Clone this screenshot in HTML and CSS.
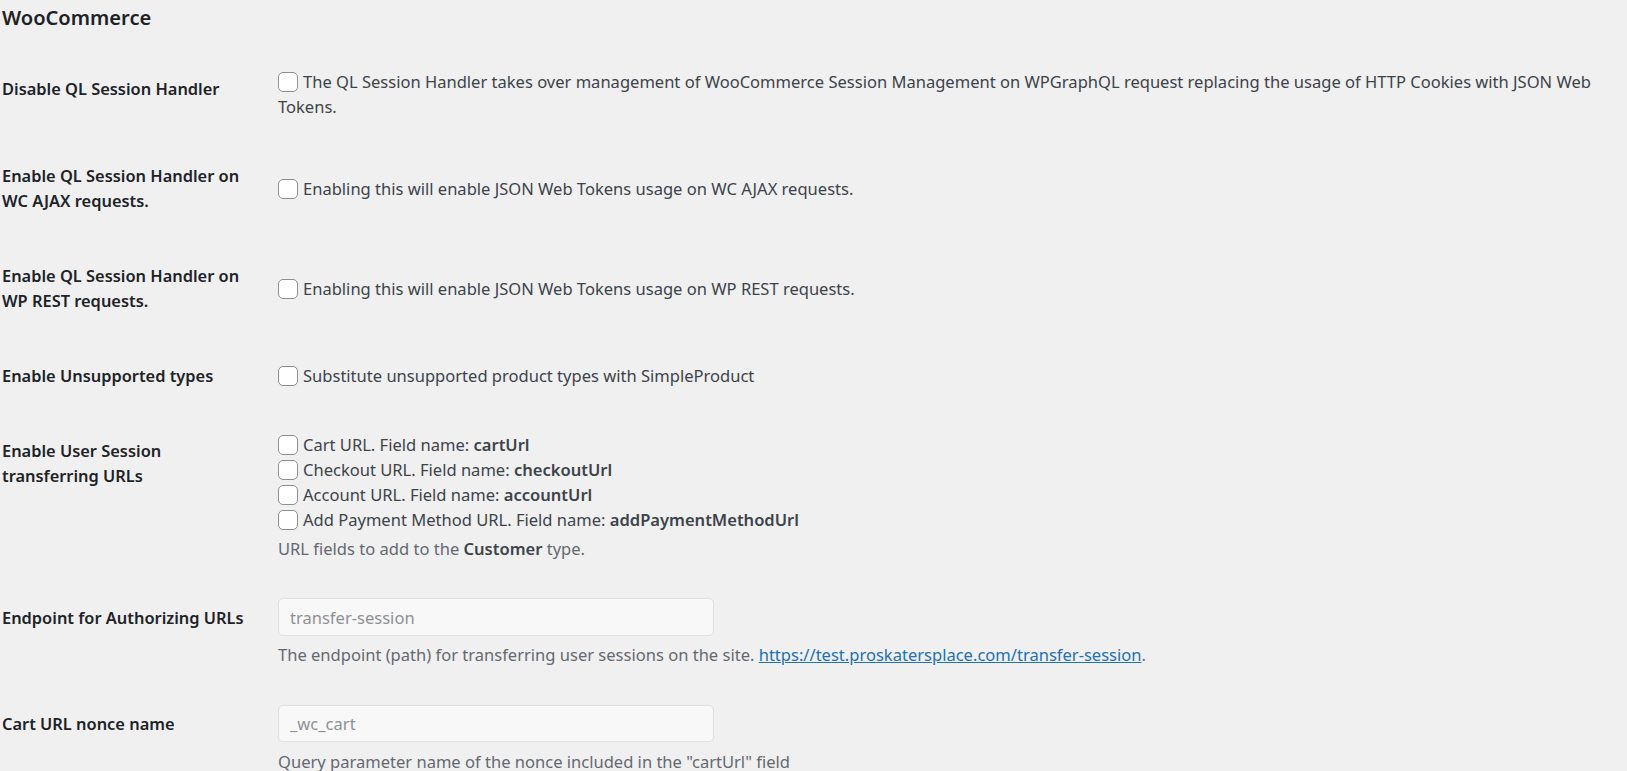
FILE: index.html
```html
<!DOCTYPE html>
<html lang="en">
<head>
<meta charset="utf-8">
<title>WooCommerce settings</title>
<link rel="stylesheet" href="styles.css">
</head>
<body>
<div class="wrap">
  <h2 class="section-title">WooCommerce</h2>
  <div class="form-table">
    <div class="row">
      <div class="th">Disable QL Session Handler</div>
      <div class="td">
        <label class="check"><input class="cb" type="checkbox">The QL Session Handler takes over management of WooCommerce Session Management on WPGraphQL request replacing the usage of HTTP Cookies with JSON Web Tokens.</label>
      </div>
    </div>
    <div class="row">
      <div class="th">Enable QL Session Handler on WC AJAX requests.</div>
      <div class="td">
        <label class="check"><input class="cb" type="checkbox">Enabling this will enable JSON Web Tokens usage on WC AJAX requests.</label>
      </div>
    </div>
    <div class="row">
      <div class="th">Enable QL Session Handler on WP REST requests.</div>
      <div class="td">
        <label class="check"><input class="cb" type="checkbox">Enabling this will enable JSON Web Tokens usage on WP REST requests.</label>
      </div>
    </div>
    <div class="row">
      <div class="th">Enable Unsupported types</div>
      <div class="td">
        <label class="check"><input class="cb" type="checkbox">Substitute unsupported product types with SimpleProduct</label>
      </div>
    </div>
    <div class="row">
      <div class="th">Enable User Session transferring URLs</div>
      <div class="td">
        <label class="check line"><input class="cb" type="checkbox">Cart URL. Field name: <strong>cartUrl</strong></label>
        <label class="check line"><input class="cb" type="checkbox">Checkout URL. Field name: <strong>checkoutUrl</strong></label>
        <label class="check line"><input class="cb" type="checkbox">Account URL. Field name: <strong>accountUrl</strong></label>
        <label class="check line"><input class="cb" type="checkbox">Add Payment Method URL. Field name: <strong>addPaymentMethodUrl</strong></label>
        <p class="description">URL fields to add to the <strong>Customer</strong> type.</p>
      </div>
    </div>
    <div class="row">
      <div class="th">Endpoint for Authorizing URLs</div>
      <div class="td">
        <input class="text-input" type="text" value="transfer-session" disabled>
        <p class="description after-input">The endpoint (path) for transferring user sessions on the site. <a href="#">https://test.proskatersplace.com/transfer-session</a>.</p>
      </div>
    </div>
    <div class="row">
      <div class="th">Cart URL nonce name</div>
      <div class="td">
        <input class="text-input" type="text" value="_wc_cart" disabled>
        <p class="description after-input">Query parameter name of the nonce included in the "cartUrl" field</p>
      </div>
    </div>
  </div>
</div>
</body>
</html>
```
FILE: styles.css
```css
* { box-sizing: border-box; }
html, body {
  margin: 0;
  padding: 0;
  background: #f0f0f1;
}
body {
  font-family: "Noto Sans", "Open Sans", sans-serif;
  font-size: 16.55px;
  line-height: 25px;
  color: #3c434a;
  overflow: hidden;
}
.wrap {
  padding: 5px 0 0 2px;
}
.section-title {
  margin: 0 0 19.5px;
  font-size: 20.1px;
  line-height: 26px;
  font-weight: 600;
  color: #1d2327;
}
.row {
  display: grid;
  grid-template-columns: 263.5px 1fr;
}
.th {
  align-self: start;
  padding: 25px 12.5px 25px 0;
  font-size: 16.4px;
  font-weight: 600;
  color: #1d2327;
}
.td {
  align-self: center;
  padding: 18.75px 12.5px;
}
.check {
  display: inline;
}
.check.line {
  display: block;
}
.check strong, .description strong {
  font-weight: 600;
  color: #3c434a;
}
.cb {
  appearance: none;
  -webkit-appearance: none;
  display: inline-block;
  width: 20px;
  height: 20px;
  margin: 0 5px 0 0;
  border: 1px solid #8c8f94;
  border-radius: 5px;
  background: #fff;
  vertical-align: -4px;
}
.description {
  margin: 4px 0 0;
  color: #646970;
}
.description.after-input {
  margin-top: 6.5px;
}
.description a {
  color: #2271b1;
  text-decoration: underline;
}
.text-input {
  display: block;
  width: 436px;
  height: 37.5px;
  margin: 0;
  padding: 0 11px;
  font-family: inherit;
  font-size: 16.55px;
  color: #8e9194;
  background: #f8f8f8;
  border: 1px solid #e0e0e1;
  border-radius: 5px;
}
```
